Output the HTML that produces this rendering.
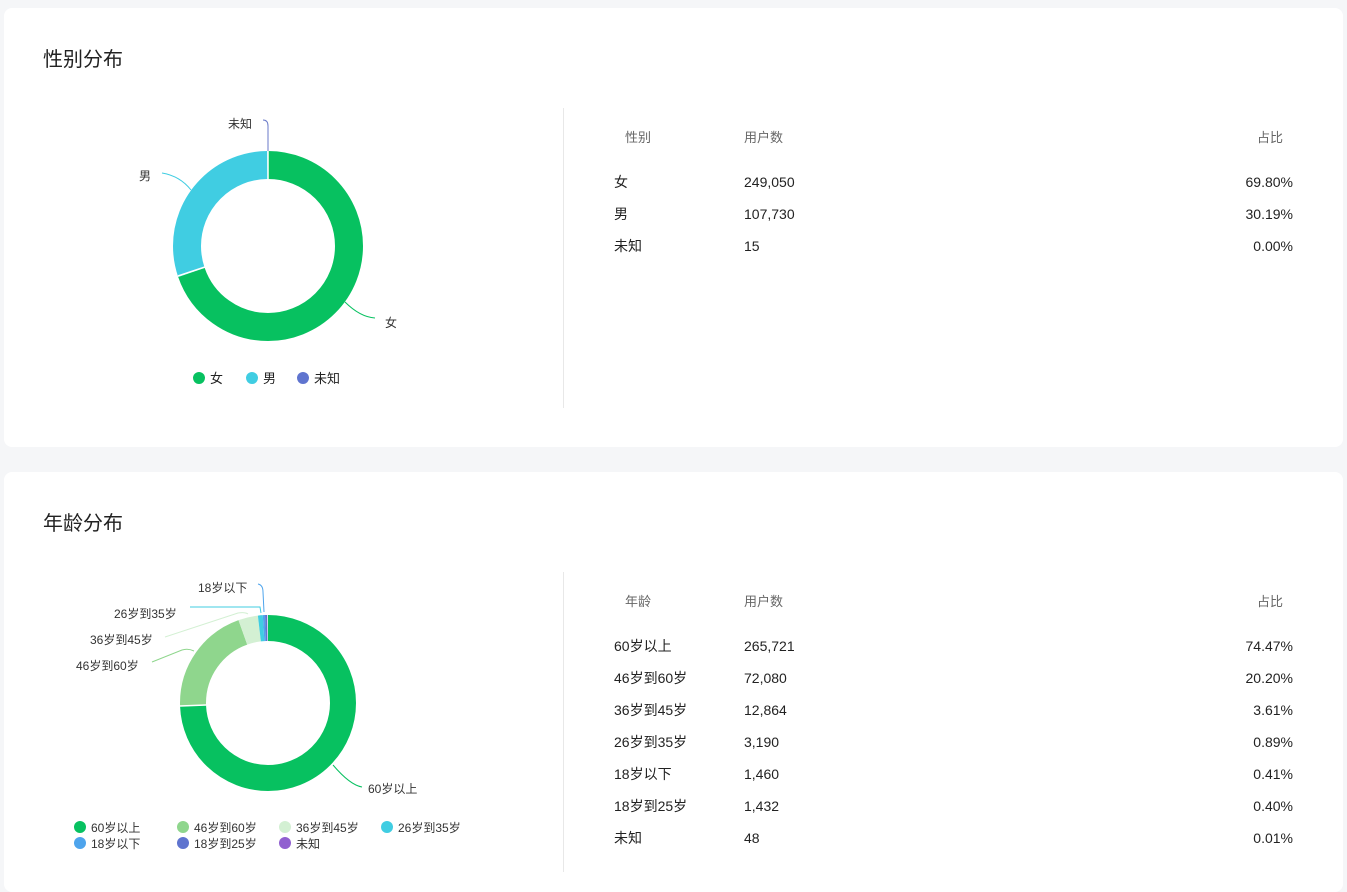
<!DOCTYPE html>
<html><head><meta charset="utf-8"><style>
body{margin:0;background:#f5f6f8;font-family:"Liberation Sans","Noto Sans CJK SC",sans-serif;color:#222;}
.card{position:absolute;left:4px;width:1339px;background:#fff;border-radius:8px;}
.t{position:absolute;white-space:nowrap;line-height:20px;}
.h{font-size:20px;color:#222;}
.th{font-size:13px;color:#666;}
.td{font-size:14px;color:#222;}
.r{text-align:right;}
.vl{position:absolute;left:563px;width:1px;background:#e8e8e8;}
.lg{font-size:12px;color:#333;line-height:16px;}
.dot{position:absolute;width:12px;height:12px;border-radius:6px;}
</style></head><body>
<div class="card" style="top:8px;height:439px"></div>
<div class="card" style="top:472px;height:420px"></div>

<div class="t h" style="left:43px;top:50px">性别分布</div>
<div class="t h" style="left:43px;top:514px">年龄分布</div>

<svg style="position:absolute;left:0;top:0" width="1347" height="878">
<g transform="rotate(-90 268 246)" fill="none" stroke-width="28">
<circle cx="268" cy="246" r="81" pathLength="100" stroke="#07c160" stroke-dasharray="69.8 100"/>
<circle cx="268" cy="246" r="81" pathLength="100" stroke="#40cde2" stroke-dasharray="30.19 100" stroke-dashoffset="-69.8"/>
</g>
<line x1="268" y1="151" x2="268" y2="179" stroke="#fff" stroke-width="1.5"/>
<line x1="178" y1="276" x2="205" y2="267" stroke="#fff" stroke-width="1.5"/>
<path d="M268 151 L268 126 Q268 120 263 120" stroke="#6a7ac8" fill="none"/>
<path d="M191 190 Q180 176 162 173" stroke="#40cde2" fill="none"/>
<path d="M345 302 Q360 317 375 318" stroke="#07c160" fill="none"/>

<g transform="rotate(-90 268 703)" fill="none" stroke-width="26">
<circle cx="268" cy="703" r="75" pathLength="100" stroke="#07c160" stroke-dasharray="74.47 100"/>
<circle cx="268" cy="703" r="75" pathLength="100" stroke="#8fd68d" stroke-dasharray="20.2 100" stroke-dashoffset="-74.47"/>
<circle cx="268" cy="703" r="75" pathLength="100" stroke="#d3f0d3" stroke-dasharray="3.61 100" stroke-dashoffset="-94.67"/>
<circle cx="268" cy="703" r="75" pathLength="100" stroke="#40cde2" stroke-dasharray="0.89 100" stroke-dashoffset="-98.28"/>
<circle cx="268" cy="703" r="75" pathLength="100" stroke="#4ea4ec" stroke-dasharray="0.41 100" stroke-dashoffset="-99.17"/>
<circle cx="268" cy="703" r="75" pathLength="100" stroke="#5f74cf" stroke-dasharray="0.4 100" stroke-dashoffset="-99.58"/>
</g>
<line x1="180" y1="706" x2="206" y2="705" stroke="#fff" stroke-width="1.5"/>
<path d="M333 765 Q350 785 362 787" stroke="#07c160" fill="none"/>
<path d="M194 651 Q188 648 182 650 L152 662" stroke="#8fd68d" fill="none"/>
<path d="M248 614 Q245 612 238 613 L165 637" stroke="#d3f0d3" fill="none"/>
<path d="M261 613 L260 607 L190 607" stroke="#40cde2" fill="none"/>
<path d="M264 612 L263 592 Q263 585 258 584" stroke="#4ea4ec" fill="none"/>
</svg>

<div class="t lg" style="left:228px;top:116px">未知</div>
<div class="t lg" style="left:139px;top:168px">男</div>
<div class="t lg" style="left:385px;top:315px">女</div>
<div class="dot" style="left:193px;top:372px;background:#07c160"></div><div class="t" style="left:210px;top:369px;font-size:13px">女</div>
<div class="dot" style="left:246px;top:372px;background:#40cde2"></div><div class="t" style="left:263px;top:369px;font-size:13px">男</div>
<div class="dot" style="left:297px;top:372px;background:#5f74cf"></div><div class="t" style="left:314px;top:369px;font-size:13px">未知</div>

<div class="t lg" style="left:198px;top:580px">18岁以下</div>
<div class="t lg" style="left:114px;top:606px">26岁到35岁</div>
<div class="t lg" style="left:90px;top:632px">36岁到45岁</div>
<div class="t lg" style="left:76px;top:658px">46岁到60岁</div>
<div class="t lg" style="left:368px;top:781px">60岁以上</div>

<div class="dot" style="left:74px;top:821px;background:#07c160"></div><div class="t lg" style="left:91px;top:820px">60岁以上</div>
<div class="dot" style="left:177px;top:821px;background:#8fd68d"></div><div class="t lg" style="left:194px;top:820px">46岁到60岁</div>
<div class="dot" style="left:279px;top:821px;background:#d3f0d3"></div><div class="t lg" style="left:296px;top:820px">36岁到45岁</div>
<div class="dot" style="left:381px;top:821px;background:#40cde2"></div><div class="t lg" style="left:398px;top:820px">26岁到35岁</div>
<div class="dot" style="left:74px;top:837px;background:#4ea4ec"></div><div class="t lg" style="left:91px;top:836px">18岁以下</div>
<div class="dot" style="left:177px;top:837px;background:#5f74cf"></div><div class="t lg" style="left:194px;top:836px">18岁到25岁</div>
<div class="dot" style="left:279px;top:837px;background:#9160d0"></div><div class="t lg" style="left:296px;top:836px">未知</div>

<div class="vl" style="top:108px;height:300px"></div>
<div class="vl" style="top:572px;height:300px"></div>

<div class="t th" style="left:625px;top:128px">性别</div>
<div class="t th" style="left:744px;top:128px">用户数</div>
<div class="t th" style="left:1257px;top:128px">占比</div>
<div class="t td" style="left:614px;top:172px">女</div><div class="t td" style="left:744px;top:172px">249,050</div><div class="t td r" style="right:54px;top:172px">69.80%</div>
<div class="t td" style="left:614px;top:204px">男</div><div class="t td" style="left:744px;top:204px">107,730</div><div class="t td r" style="right:54px;top:204px">30.19%</div>
<div class="t td" style="left:614px;top:236px">未知</div><div class="t td" style="left:744px;top:236px">15</div><div class="t td r" style="right:54px;top:236px">0.00%</div>

<div class="t th" style="left:625px;top:592px">年龄</div>
<div class="t th" style="left:744px;top:592px">用户数</div>
<div class="t th" style="left:1257px;top:592px">占比</div>
<div class="t td" style="left:614px;top:636px">60岁以上</div><div class="t td" style="left:744px;top:636px">265,721</div><div class="t td r" style="right:54px;top:636px">74.47%</div>
<div class="t td" style="left:614px;top:668px">46岁到60岁</div><div class="t td" style="left:744px;top:668px">72,080</div><div class="t td r" style="right:54px;top:668px">20.20%</div>
<div class="t td" style="left:614px;top:700px">36岁到45岁</div><div class="t td" style="left:744px;top:700px">12,864</div><div class="t td r" style="right:54px;top:700px">3.61%</div>
<div class="t td" style="left:614px;top:732px">26岁到35岁</div><div class="t td" style="left:744px;top:732px">3,190</div><div class="t td r" style="right:54px;top:732px">0.89%</div>
<div class="t td" style="left:614px;top:764px">18岁以下</div><div class="t td" style="left:744px;top:764px">1,460</div><div class="t td r" style="right:54px;top:764px">0.41%</div>
<div class="t td" style="left:614px;top:796px">18岁到25岁</div><div class="t td" style="left:744px;top:796px">1,432</div><div class="t td r" style="right:54px;top:796px">0.40%</div>
<div class="t td" style="left:614px;top:828px">未知</div><div class="t td" style="left:744px;top:828px">48</div><div class="t td r" style="right:54px;top:828px">0.01%</div>
</body></html>
